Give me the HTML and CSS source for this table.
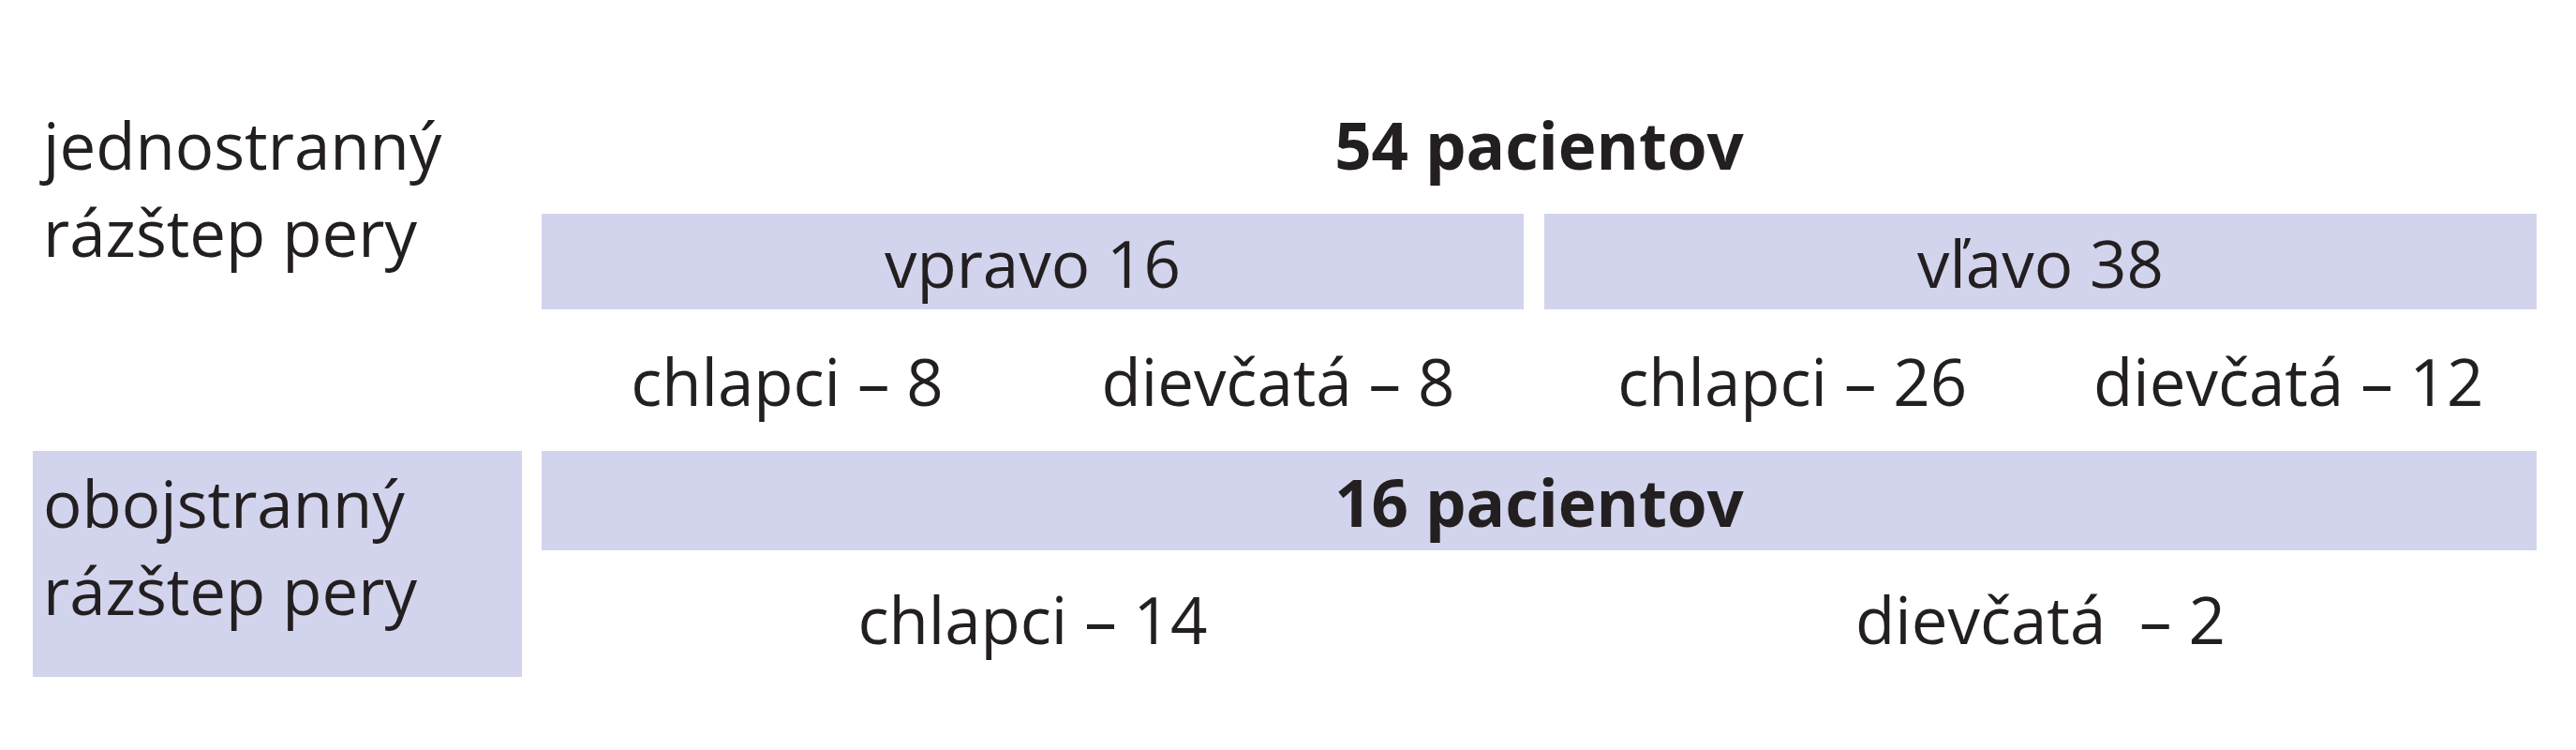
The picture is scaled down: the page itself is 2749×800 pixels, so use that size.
FILE: index.html
```html
<!DOCTYPE html>
<html lang="sk">
<head>
<meta charset="utf-8">
<title>Rázštep pery – pacienti</title>
<link rel="stylesheet" href="styles.css">
</head>
<body>
<div class="table">
  <div class="group">
    <div class="label">jednostranný<br>rázštep pery</div>
    <div class="body">
      <div class="total">54 pacientov</div>
      <div class="halves">
        <div class="half">
          <div class="side">vpravo 16</div>
          <div class="kids">
            <div class="kid">chlapci – 8</div>
            <div class="kid">dievčatá – 8</div>
          </div>
        </div>
        <div class="half">
          <div class="side">vľavo 38</div>
          <div class="kids">
            <div class="kid">chlapci – 26</div>
            <div class="kid">dievčatá – 12</div>
          </div>
        </div>
      </div>
    </div>
  </div>
  <div class="group">
    <div class="label boxed">obojstranný<br>rázštep pery</div>
    <div class="body">
      <div class="total boxed-total">16 pacientov</div>
      <div class="halves bottom">
        <div class="kid">chlapci – 14</div>
        <div class="kid">dievčatá&nbsp; – 2</div>
      </div>
    </div>
  </div>
</div>
</body>
</html>
```

FILE: styles.css
```css
html, body {
  margin: 0;
  padding: 0;
  background: #ffffff;
}

body {
  font-family: "Open Sans", "Noto Sans", "Liberation Sans", sans-serif;
  font-size: 69px;
  color: #231f20;
}

.table {
  padding: 108px 0 0 35px;
  width: 2672px;
}

.group {
  display: grid;
  grid-template-columns: 522px 2129px;
  column-gap: 21px;
}

.label {
  line-height: 93px;
  padding-left: 11px;
}

.label.boxed {
  background: #d2d3ec;
  padding-top: 9px;
}

.total {
  text-align: center;
  font-weight: 700;
  line-height: 93px;
  height: 93px;
  padding-bottom: 27px;
}

.total.boxed-total {
  background: #d2d3ec;
  height: 103px;
  line-height: 103px;
  padding: 3px 0 0;
}

.halves {
  display: grid;
  grid-template-columns: 1048px 1059px;
  column-gap: 22px;
}

.side {
  background: #d2d3ec;
  text-align: center;
  height: 99px;
  line-height: 99px;
  padding-top: 3px;
}

.kids {
  display: grid;
  grid-template-columns: 1fr 1fr;
  padding: 30px 0 28px;
}

.kid {
  text-align: center;
  line-height: 93px;
}

.halves.bottom {
  padding: 27px 0 15px;
}
```
